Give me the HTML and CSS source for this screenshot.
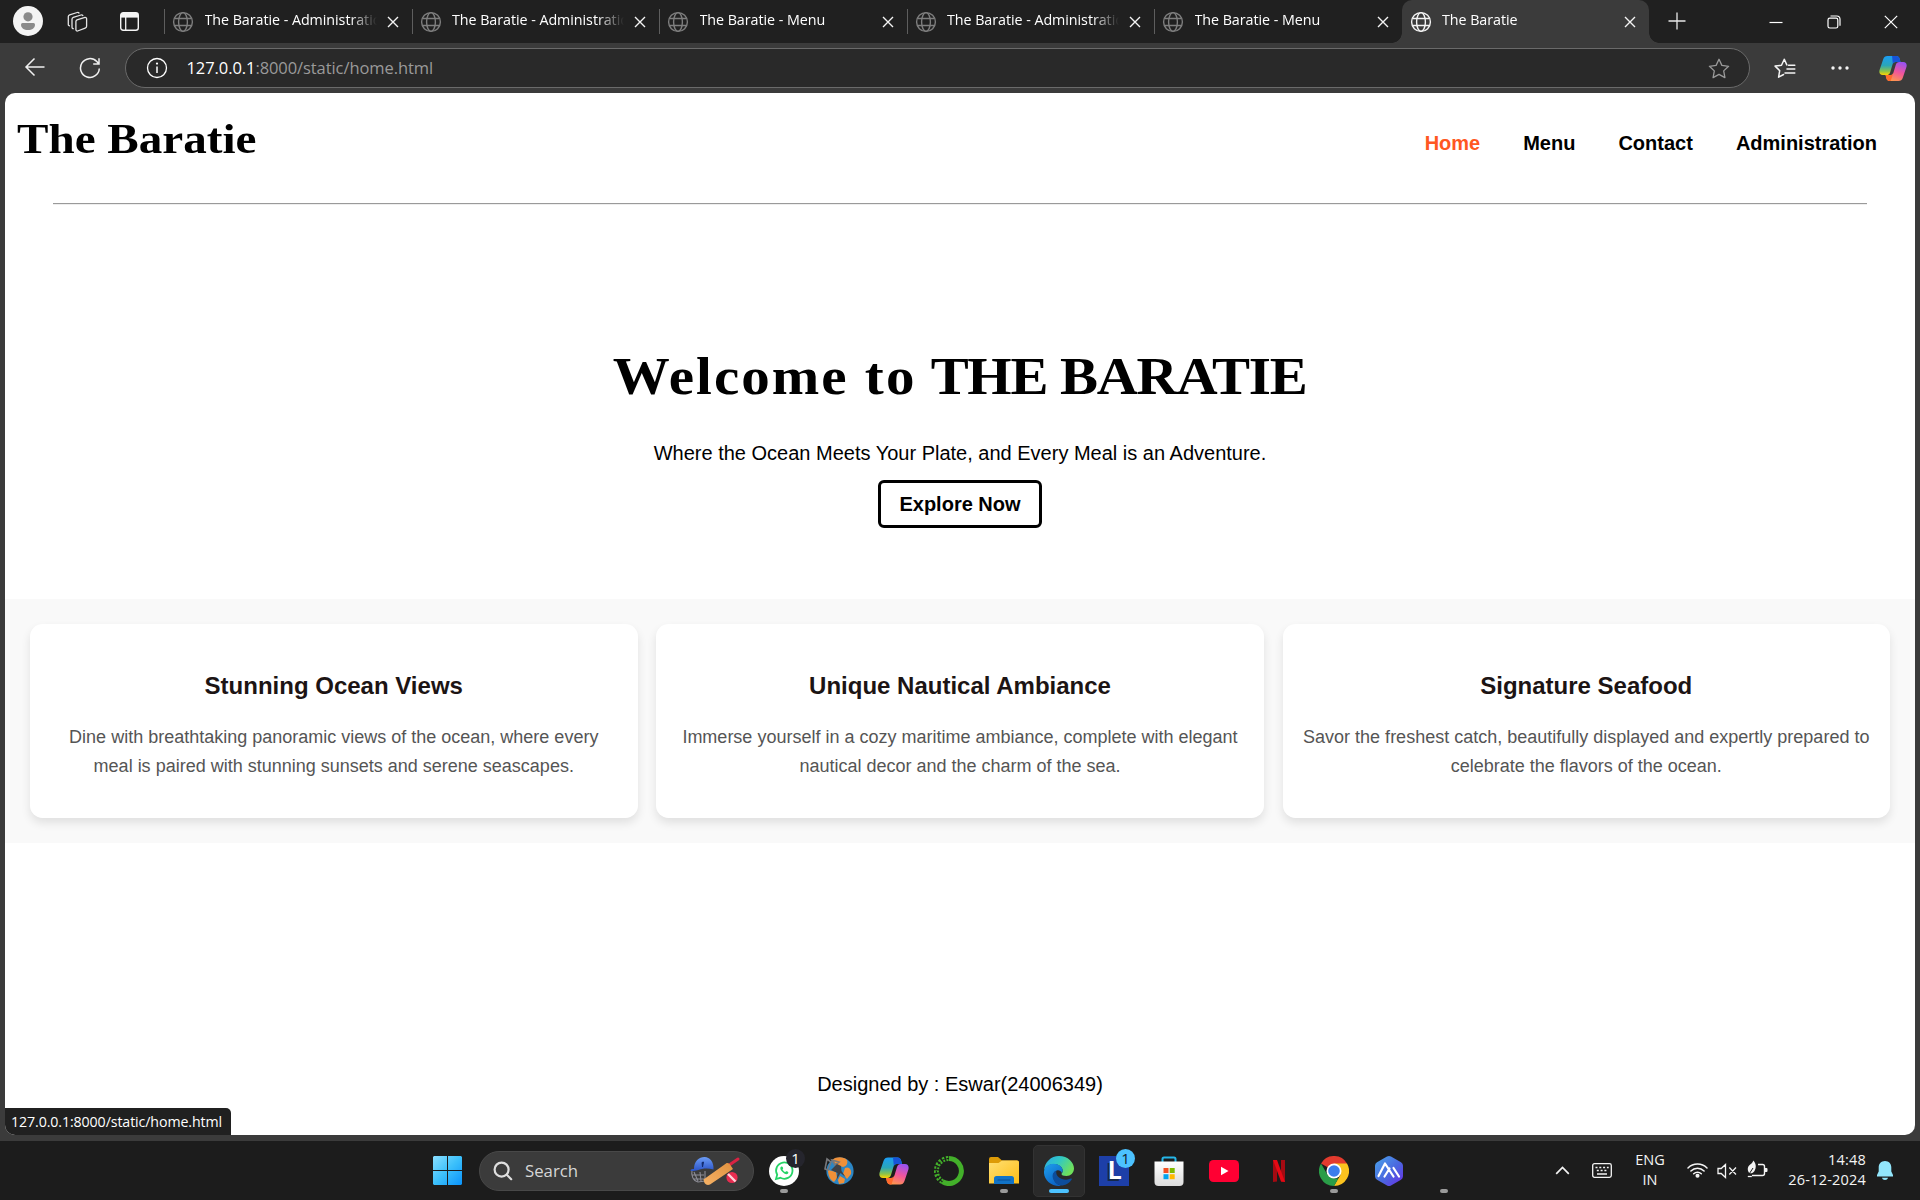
FILE: index.html
```html
<!DOCTYPE html>
<html lang="en">
<head>
<meta charset="utf-8">
<title>The Baratie</title>
<link rel="stylesheet" href="styles.css">
</head>
<body>
<svg class="defs" width="0" height="0">
  <defs>
    <symbol id="globe" viewBox="0 0 22 22"><g fill="none" stroke="currentColor" stroke-width="1.4"><circle cx="11" cy="11" r="9.4"/><ellipse cx="11" cy="11" rx="4.4" ry="9.4"/><path d="M2.4 7.5h17.2M2.4 14.5h17.2"/></g></symbol>
    <symbol id="cross" viewBox="0 0 12 12"><path d="M1 1l10 10M11 1L1 11" fill="none" stroke="currentColor" stroke-width="1.4"/></symbol>
    <symbol id="copilot" viewBox="0 0 30 28">
      <path d="M9 0.5h9.5c2 0 3 1 3.6 3l.9 3.5h-5c-2 0-3 1-3.6 3l-2.4 8c-.7 2-1.800 3-3.800 3H4C1 21-.2 18.500.6 15.500L4.500 4C5.300 1.600 6.800.5 9 .5z" fill="url(#cpA)"/>
      <path d="M14 .5h4.500c2 0 3 1 3.600 3L23 7h-5c-1.500 0-2.500.6-3.200 2z" fill="#1653d8"/>
      <path d="M21 27.500h-9.500c-2 0-3-1-3.600-3L7 21h5c2 0 3-1 3.600-3l2.400-8c.7-2 1.800-3 3.800-3H26c3 0 4.200 2.500 3.400 5.500L25.500 24c-.8 2.400-2.300 3.500-4.500 3.500z" fill="url(#cpB)"/>
      <path d="M7 21h5c1.700 0 2.700-.8 3.400-2.500L12.500 27.500h-1c-2 0-3-1-3.600-3z" fill="#ff6a2c"/>
    </symbol>
    <linearGradient id="cpA" x1="0" y1="0" x2="0" y2="1"><stop offset="0" stop-color="#1b9df5"/><stop offset=".5" stop-color="#2aa6b8"/><stop offset=".8" stop-color="#8bc34a"/><stop offset="1" stop-color="#ffd400"/></linearGradient>
    <linearGradient id="cpB" x1=".7" y1="0" x2=".3" y2="1"><stop offset="0" stop-color="#9a52f0"/><stop offset=".5" stop-color="#f2559b"/><stop offset="1" stop-color="#ff9a4a"/></linearGradient>
    <linearGradient id="win" gradientUnits="userSpaceOnUse" x1="0" y1="0" x2="29" y2="29"><stop offset="0" stop-color="#8adfff"/><stop offset=".5" stop-color="#3cc0fb"/><stop offset="1" stop-color="#0a93fb"/></linearGradient>
    <linearGradient id="folder" x1="0" y1="0" x2="1" y2="1"><stop offset="0" stop-color="#ffdf73"/><stop offset="1" stop-color="#fdbe16"/></linearGradient>
    <linearGradient id="edgeTop" x1="0" y1="0" x2="1" y2=".5"><stop offset="0" stop-color="#2aa8ea"/><stop offset=".5" stop-color="#31c8c4"/><stop offset="1" stop-color="#6fe05c"/></linearGradient>
    <linearGradient id="edgeBody" x1="0" y1="0" x2=".6" y2="1"><stop offset="0" stop-color="#1fa0ee"/><stop offset="1" stop-color="#0b62c4"/></linearGradient>
    <linearGradient id="bag" x1="0" y1="0" x2="0" y2="1"><stop offset="0" stop-color="#ffffff"/><stop offset="1" stop-color="#dcdcdc"/></linearGradient>
    <linearGradient id="hex" x1="0" y1="0" x2="1" y2="1"><stop offset="0" stop-color="#4aa5ea"/><stop offset=".55" stop-color="#4a67df"/><stop offset="1" stop-color="#6a2be6"/></linearGradient>
    <linearGradient id="helmet" x1="0" y1="0" x2="0" y2="1"><stop offset="0" stop-color="#6c9cf6"/><stop offset="1" stop-color="#2a52c6"/></linearGradient>
    <linearGradient id="bat" x1="0" y1="1" x2="1" y2="0"><stop offset="0" stop-color="#f6b266"/><stop offset="1" stop-color="#e0913f"/></linearGradient>
  </defs>
</svg>

<div class="screen">
  <div class="tabstrip">
    <svg class="avatar" width="30" height="30" viewBox="0 0 30 30"><circle cx="15" cy="15" r="15" fill="#f4f4f4"/><circle cx="15" cy="10.800" r="4.600" fill="#8a8a8a"/><path d="M9.500 17h11a1.500 1.500 0 0 1 1.500 1.500c0 3.700-3 5.500-7 5.500s-7-1.800-7-5.500A1.500 1.500 0 0 1 9.500 17z" fill="#8a8a8a"/></svg>
    <svg class="workspaces" width="22" height="22" viewBox="0 0 22 22" fill="none" stroke="#e4e4e4" stroke-width="1.300" stroke-linejoin="round"><path d="M11 8.800l8-2.400a1.300 1.300 0 0 1 1.600 1.300v7.500a2 2 0 0 1-1.400 1.900L11.600 20a1.300 1.300 0 0 1-1.700-1.200V10.500A2 2 0 0 1 11 8.800z"/><path d="M7.800 17.600c-1 .2-1.800-.3-1.800-1.400V8.200c0-.9.500-1.500 1.300-1.800L15 4c1-.3 1.800.1 2 1M4 14.800c-1 .1-1.700-.4-1.700-1.400V5.600c0-.9.500-1.500 1.300-1.800l7.600-2.300c1-.3 1.800.1 2 1"/></svg>
    <svg class="tabmenu" width="19" height="19" viewBox="0 0 19 19"><rect x=".7" y=".7" width="17.600" height="17.600" rx="2.500" fill="none" stroke="#f4f4f4" stroke-width="1.400"/><path d="M1 1h17v4.600H1z" fill="#f4f4f4"/><path d="M5.700 5v13" stroke="#f4f4f4" stroke-width="1.300"/></svg>
    <div class="tabs">
      <div class="tab"><svg class="globe"><use href="#globe"/></svg><span class="tab-title">The Baratie - Administration</span><svg class="close"><use href="#cross"/></svg></div>
      <div class="tab"><svg class="globe"><use href="#globe"/></svg><span class="tab-title">The Baratie - Administration</span><svg class="close"><use href="#cross"/></svg></div>
      <div class="tab"><svg class="globe"><use href="#globe"/></svg><span class="tab-title">The Baratie - Menu</span><svg class="close"><use href="#cross"/></svg></div>
      <div class="tab"><svg class="globe"><use href="#globe"/></svg><span class="tab-title">The Baratie - Administration</span><svg class="close"><use href="#cross"/></svg></div>
      <div class="tab"><svg class="globe"><use href="#globe"/></svg><span class="tab-title">The Baratie - Menu</span><svg class="close"><use href="#cross"/></svg></div>
      <div class="tab active"><svg class="globe"><use href="#globe"/></svg><span class="tab-title">The Baratie</span><svg class="close"><use href="#cross"/></svg></div>
    </div>
    <svg class="newtab" width="18" height="18" viewBox="0 0 18 18"><path d="M9 .5v17M.5 9h17" stroke="#e8e8e8" stroke-width="1.300"/></svg>
    <div class="window-buttons">
      <svg width="14" height="14" viewBox="0 0 14 14"><path d="M.5 7.500h13" stroke="#fff" stroke-width="1.200"/></svg>
      <svg width="14" height="14" viewBox="0 0 14 14" fill="none" stroke="#fff" stroke-width="1.200"><rect x="1" y="3.200" width="9.800" height="9.800" rx="1.800"/><path d="M3.500 1h6.300A3.200 3.200 0 0 1 13 4.200v6.500"/></svg>
      <svg width="14" height="14" viewBox="0 0 14 14"><path d="M.8.8l12.400 12.400M13.200.8L.8 13.200" stroke="#fff" stroke-width="1.200"/></svg>
    </div>
  </div>

  <div class="toolbar">
    <svg class="back" width="22" height="20" viewBox="0 0 22 20"><path d="M20.500 10H2M10.500 1.500L2 10l8.500 8.500" fill="none" stroke="#f0f0f0" stroke-width="1.500"/></svg>
    <svg class="reload" width="22" height="22" viewBox="0 0 22 22"><path d="M20.300 11.500A9.400 9.400 0 1 1 17.800 4.600L20 7M20 1.200V7h-5.800" fill="none" stroke="#f0f0f0" stroke-width="1.500"/></svg>
    <div class="omnibox">
      <svg width="22" height="22" viewBox="0 0 22 22"><circle cx="11" cy="11" r="9.500" fill="none" stroke="#fff" stroke-width="1.300"/><path d="M11 9.500v6.500" stroke="#fff" stroke-width="1.500"/><circle cx="11" cy="6.600" r="1.100" fill="#fff"/></svg>
      <span class="url"><b>127.0.0.1</b>:8000/static/home.html</span>
      <svg class="star" width="22" height="21" viewBox="0 0 22 21"><path d="M11 1.300l2.900 6.100 6.700.9-4.900 4.600 1.200 6.700L11 16.400l-5.900 3.200 1.200-6.700L1.400 8.300l6.700-.9z" fill="none" stroke="#9a9a9a" stroke-width="1.300" stroke-linejoin="round"/></svg>
    </div>
    <svg class="favorites" width="22" height="21" viewBox="0 0 22 21" fill="none" stroke="#f4f4f4" stroke-width="1.500" stroke-linejoin="round" stroke-linecap="round"><path d="M12.800 6.900L10.300 1.300 7.500 7.200l-6.400.9 4.600 4.500-1.100 6.600 5-2.700M13 11h7.800M14.500 7.200h6.300M11 15h9.800"/></svg>
    <svg class="more" width="18" height="4" viewBox="0 0 18 4" fill="#f4f4f4"><circle cx="2" cy="2" r="1.700"/><circle cx="9" cy="2" r="1.700"/><circle cx="16" cy="2" r="1.700"/></svg>
    <svg class="sidebar-copilot" width="28" height="27" preserveAspectRatio="none"><use href="#copilot"/></svg>
  </div>

  <div class="viewport">
    <main class="page">
      <header class="site-header">
        <div class="logo">The Baratie</div>
        <nav class="site-nav"><a class="current">Home</a><a>Menu</a><a>Contact</a><a>Administration</a></nav>
      </header>
      <hr class="rule">
      <section class="hero">
        <h1><span class="greeting">Welcome to</span> <span class="name">THE BARATIE</span></h1>
        <p>Where the Ocean Meets Your Plate, and Every Meal is an Adventure.</p>
        <a class="explore">Explore Now</a>
      </section>
      <section class="features">
        <article class="card"><h3>Stunning Ocean Views</h3><p>Dine with breathtaking panoramic views of the ocean, where every meal is paired with stunning sunsets and serene seascapes.</p></article>
        <article class="card"><h3>Unique Nautical Ambiance</h3><p>Immerse yourself in a cozy maritime ambiance, complete with elegant nautical decor and the charm of the sea.</p></article>
        <article class="card"><h3>Signature Seafood</h3><p>Savor the freshest catch, beautifully displayed and expertly prepared to celebrate the flavors of the ocean.</p></article>
      </section>
      <footer class="site-footer">Designed by : Eswar(24006349)</footer>
    </main>
    <div class="status">127.0.0.1:8000/static/home.html</div>
  </div>

  <div class="taskbar">
    <svg class="start" width="29" height="29" viewBox="0 0 29 29" fill="url(#win)"><path d="M1 0h13v14H0V1zM15 0h13l1 1v13H15zM0 15h14v14H1l-1-1zM15 15h14v13l-1 1H15z"/></svg>
    <div class="search">
      <svg width="20" height="20" viewBox="0 0 20 20" fill="none" stroke="#dedede" stroke-width="2.200" stroke-linecap="round"><circle cx="8.600" cy="8.600" r="7"/><path d="M13.800 13.800l4.400 4.400"/></svg>
      <span>Search</span>
      <svg class="cricket" width="50" height="29" viewBox="0 0 50 29">
        <g fill="none" stroke="#8d8d96" stroke-width="1.100"><path d="M2 15c-1 4 1 10 6 11l7-1M4 16l4 9M10 16l1 9M2 19h12M3 23h12M15 15v10"/></g>
        <path d="M4 13C4 5 9 1 14.500 1S24 6 23.500 13.500c-6-1.500-11-1-16 .8-3 1-7 1.200-7-.1 0-.8 2-1.200 3.500-1.200z" fill="url(#helmet)"/>
        <path d="M12 6.500l1.500-.5-1 5z" fill="#112a70" stroke="#112a70"/>
        <path d="M40 8.500l8-5.500" stroke="#d92343" stroke-width="3" stroke-linecap="round"/>
        <path d="M13.500 23.500L36 7.500c1.600-1 3.500 0 4.500 1.800L43 13 20 28.500c-2 1-4 .5-5.500-1.500z" fill="url(#bat)"/>
        <circle cx="42" cy="21.500" r="5.600" fill="#e82c50"/><path d="M38 18l7.500 7.500" stroke="#ffd2da" stroke-width="2.400"/>
      </svg>
    </div>
    <div class="apps">
      <div class="app running"><svg width="30" height="30" viewBox="0 0 30 30"><circle cx="15" cy="15" r="15" fill="#fff"/><path d="M7 23l1.200-4.300A8.200 8.200 0 1 1 11.400 21.800z" fill="none" stroke="#25d366" stroke-width="1.800"/><path d="M12.300 10.500c-1.500.8-1.300 2.800.7 5s4.500 3.400 5.800 2.200c1-1 .7-1.500-.3-2.100-1.300-.7-1.500-.4-2.200.4-1.200-.4-2.200-1.400-2.800-2.600.7-.7.900-1 .3-2.100-.3-.7-.8-1.100-1.500-.8z" fill="#25d366"/></svg><span class="badge dark">1</span></div>
      <div class="app"><svg width="30" height="30" viewBox="0 0 30 30"><circle cx="16" cy="15" r="13.600" fill="#2b86c5"/><path d="M8 4c5-4 12-3 15 0 1 3 0 6-4 7l-6-2z M21 12c4-2 7 2 6 6l-4 5-4-5z M4 14l8 2 1 6-3 4c-4-2-6-7-6-12z M16 20l5 3-1 4-5 1-1-4z" fill="#f09038"/><path d="M3 3l4 3-3 8-3-1zM8 4l7 2-4 3z" fill="none" stroke="#77787b" stroke-width="1.600"/><path d="M7 14l6-6 4 2 .5 5 4 6-5-4-4 7 1-7z" fill="#3f4146"/></svg></div>
      <div class="app"><svg width="30" height="28"><use href="#copilot"/></svg></div>
      <div class="app"><svg width="30" height="30" viewBox="0 0 30 30" fill="none" stroke="#43b02a"><path d="M15 2.500a12.500 12.500 0 1 1-6.600 23.200" stroke-width="5"/><path d="M8.400 25.700A12.500 12.500 0 0 1 15 2.500" stroke-width="5" stroke-dasharray="2.200 1.500"/><path d="M8.400 25.700A12.500 12.500 0 0 1 15 2.500" stroke="#1c1c1c" stroke-width="1.200" stroke-dasharray="3 2"/></svg></div>
      <div class="app running"><svg width="30" height="27" viewBox="0 0 30 27"><path d="M0 2a2 2 0 0 1 2-2h7l4 3.500h15a2 2 0 0 1 2 2V12H0z" fill="#dd9b07"/><path d="M0 6h9.500L13 3.600h15a2 2 0 0 1 2 2V26.500H0z" fill="url(#folder)"/><path d="M5 27v-5.500a2.500 2.500 0 0 1 2.500-2.500h15a2.500 2.500 0 0 1 2.500 2.500V27z" fill="#1173c7"/><path d="M9 23h12" stroke="#0b4f96" stroke-width="1.200" stroke-linecap="round"/></svg></div>
      <div class="app running selected"><svg width="30" height="30" viewBox="0 0 30 30"><path d="M0 15C.5 6 7 0 15 0c9 0 15 6.500 15 12.500 0 4.500-3.500 7.500-7.500 7.500-3.300 0-5-1-5-2 0-.7 1.200-1.300 1.200-3.300C18.700 11 14.500 8 10 8 5 8 1 11 0 15z" fill="url(#edgeTop)"/><path d="M0 15.500C.5 11 4.500 7.700 9.500 7.700c5 0 9.200 3 9.200 6.800 0 1-.3 1.800-.8 2.400-1-2-3-3-5-2.400-3 1-4.200 4-3.400 7.500 1.200 4.800 5 7.600 8.500 7.600-1 .3-2 .4-3 .4C6.500 30-.5 23.500 0 15.500z" fill="url(#edgeBody)"/><path d="M12.500 14.500c-3 1-4.500 4-3.600 7.500 1.200 4.700 5.200 7.700 9.600 7.500 4-.7 7.200-2.800 9.200-6 .4-.7-.2-1.200-.9-.9-2.800 1.300-5.800 1.400-8.800.4-4.500-1.500-6.500-5-5.500-8.500z" fill="#0d4d9b"/></svg></div>
      <div class="app"><span class="letter">L</span><span class="badge blue">1</span></div>
      <div class="app"><svg width="30" height="30" viewBox="0 0 30 30"><path d="M8.500 7V3a1.500 1.500 0 0 1 1.500-1.500h10A1.500 1.500 0 0 1 21.500 3v4" fill="none" stroke="#25b6e8" stroke-width="2"/><path d="M.5 5.500h29V26a4 4 0 0 1-4 4h-21a4 4 0 0 1-4-4z" fill="url(#bag)"/><path d="M9.500 12h5v5h-5z" fill="#f25022"/><path d="M15.700 12h5v5h-5z" fill="#7fba00"/><path d="M9.500 18.200h5v5h-5z" fill="#00a4ef"/><path d="M15.700 18.200h5v5h-5z" fill="#ffb900"/></svg></div>
      <div class="app"><svg width="30" height="22" viewBox="0 0 30 22"><rect width="30" height="22" rx="4.500" fill="#ff0033"/><path d="M12 6.800v8.400l7.500-4.200z" fill="#fff"/></svg></div>
      <div class="app"><svg width="12" height="22" viewBox="0 0 12 22"><path d="M0 0h4v21.500L0 22zM8 0h4v22l-4-.5z" fill="#a50a12"/><path d="M0 0h4l8 22-4-.5z" fill="#e50914"/></svg></div>
      <div class="app running"><svg width="30" height="30" viewBox="0 0 30 30"><path d="M15 15L2 7.500A15 15 0 0 1 28 7.500z" fill="#e33b2e"/><path d="M15 7.500h13A15 15 0 0 1 15 30l6.500-11.200z" fill="#fcc31e"/><path d="M2 7.500l6.500 11.300L15 22.500h4.300L15 30A15 15 0 0 1 2 7.500z" fill="#2a9d48"/><circle cx="15" cy="15" r="7.500" fill="#fff"/><circle cx="15" cy="15" r="5.800" fill="#3b7ded"/></svg></div>
      <div class="app"><svg width="28" height="30" viewBox="0 0 28 30"><path d="M12 .6a4 4 0 0 1 4 0l10 5.700a4 4 0 0 1 2 3.500v10.400a4 4 0 0 1-2 3.500l-10 5.700a4 4 0 0 1-4 0L2 23.700a4 4 0 0 1-2-3.500V9.800a4 4 0 0 1 2-3.500z" fill="url(#hex)"/><path d="M3.500 20L10 7.500 18.500 20.500M9.500 20.500L14.500 12.500M18.500 12l5.500 8.500" fill="none" stroke="#fff" stroke-width="2.200" stroke-linecap="round" stroke-linejoin="round"/></svg></div>
      <div class="app running"></div>
    </div>
    <div class="tray">
      <svg class="chevron" width="15" height="9" viewBox="0 0 15 9"><path d="M1.200 7.800l6.300-6.300 6.300 6.300" fill="none" stroke="#f4f4f4" stroke-width="1.700"/></svg>
      <svg class="keyboard" width="20" height="15" viewBox="0 0 20 15"><rect x=".7" y=".7" width="18.600" height="13.600" rx="1.800" fill="none" stroke="#f4f4f4" stroke-width="1.300"/><path d="M3.500 4.500h2m1.800 0h2m1.800 0h2m1.800 0h1.800M4.800 7.500h2m1.800 0h2m1.800 0h2M5 11h10" stroke="#f4f4f4" stroke-width="1.500"/></svg>
      <div class="lang"><span>ENG</span><span>IN</span></div>
      <svg class="wifi" width="21" height="16" viewBox="0 0 21 16" fill="none" stroke="#f4f4f4" stroke-width="1.500" stroke-linecap="round"><path d="M1 6a13.400 13.400 0 0 1 19 0M3.900 9a9.300 9.300 0 0 1 13.200 0M6.700 11.800a5.400 5.400 0 0 1 7.600 0"/><circle cx="10.500" cy="13.800" r="1.300" fill="#f4f4f4"/></svg>
      <svg class="volume" width="20" height="16" viewBox="0 0 20 16" fill="none" stroke="#f4f4f4" stroke-width="1.300"><path d="M1 5.500h3.200l4.300-4v13l-4.300-4H1zM12.300 4.500l6.700 7M19 4.500l-6.700 7"/></svg>
      <svg class="battery" width="21" height="18" viewBox="0 0 21 18"><path d="M11 4.500h4.500a2 2 0 0 1 2 2v7a2 2 0 0 1-2 2H5" fill="none" stroke="#f4f4f4" stroke-width="1.400"/><path d="M18 8h1.500q1 0 1 1v2q0 1-1 1H18z" fill="#f4f4f4"/><path d="M6.200.5c3 3 3.300 7 1.300 10.500C6 13.500 3 14 1.800 12.500-.3 9 1 6 3.500 4.200 5 3.200 6 2 6.200.5z" fill="#f4f4f4"/><path d="M.5 16.500L6 8" stroke="#1c1c1c" stroke-width="1"/><path d="M.8 16.500h4" stroke="#f4f4f4" stroke-width="1.300"/></svg>
      <div class="clock"><span>14:48</span><span>26-12-2024</span></div>
      <svg class="bell" width="16" height="19" viewBox="0 0 16 19" fill="#92e6fb"><path d="M8 0c3.800 0 6.300 2.800 6.300 6.300v4.200L16 14v1.500H0V14l1.700-3.500V6.300C1.700 2.800 4.200 0 8 0zM5 16.800h6c-.4 1.400-1.500 2.200-3 2.200s-2.600-.8-3-2.200z"/></svg>
    </div>
  </div>
</div>
</body>
</html>
```
FILE: styles.css
```css
* { box-sizing: border-box; }
body { margin: 0; background: #1c1c1c; }
svg { display: block; flex: none; }
.defs { position: absolute; }

.screen {
  width: 1920px;
  height: 1200px;
  display: flex;
  flex-direction: column;
  overflow: hidden;
  background: #3b3b3b;
  font-family: "Open Sans", "Noto Sans", sans-serif;
}

/* Tab strip */
.tabstrip {
  height: 43px;
  background: #202020;
  display: flex;
  align-items: center;
  color: #fff;
}
.avatar { margin-left: 13px; margin-top: -1px; }
.workspaces { margin-left: 23px; }
.tabmenu { margin-left: 32px; }
.tabs { display: flex; margin-left: 25px; height: 43px; }
.tab {
  width: 247.5px;
  height: 43px;
  display: flex;
  align-items: center;
  padding-left: 8px;
  background: linear-gradient(#5e5e5e, #5e5e5e) no-repeat 0 9px / 1px 25px;
}
.globe { width: 22px; height: 22px; margin-top: 1px; color: #7e7e7e; }
.tab-title {
  width: 172px;
  margin-left: 10.500px;
  margin-top: -3px;
  font-size: 14.300px;
  letter-spacing: -0.050px;
  line-height: 22px;
  white-space: nowrap;
  overflow: hidden;
  -webkit-mask-image: linear-gradient(90deg, #000 145px, transparent 172px);
  mask-image: linear-gradient(90deg, #000 145px, transparent 172px);
}
.close { width: 12px; height: 12px; margin-left: 10px; margin-top: 1px; color: #f4f4f4; }
.tab.active {
  background: #3b3b3b;
  border-radius: 10px 10px 0 0;
  position: relative;
}
.tab.active::before,
.tab.active::after {
  content: "";
  position: absolute;
  bottom: 0;
  width: 10px;
  height: 10px;
}
.tab.active::before { left: -10px; background: radial-gradient(circle at 0 0, transparent 9.500px, #3b3b3b 10px); }
.tab.active::after { right: -10px; background: radial-gradient(circle at 100% 0, transparent 9.500px, #3b3b3b 10px); }
.tab.active .globe { color: #f4f4f4; }
.newtab { margin-left: 18.500px; margin-top: -1px; }
.window-buttons { display: flex; gap: 43.500px; margin-left: auto; margin-right: 22px; }

/* Toolbar */
.toolbar {
  height: 50px;
  display: flex;
  align-items: center;
  background: #3b3b3b;
}
.back { margin-left: 24px; margin-top: -2px; }
.reload { margin-left: 33px; margin-top: -1px; }
.omnibox {
  width: 1625px;
  height: 40px;
  margin-left: 24px;
  padding: 0 19px 0 20px;
  border: 1px solid #6a6a6a;
  border-radius: 20px;
  background: #292929;
  display: flex;
  align-items: center;
}
.url { margin-left: 18.500px; margin-top: -2px; font-size: 16.500px; letter-spacing: -0.080px; color: #9a9a9a; flex: 1; }
.url b { font-weight: 400; color: #fff; }
.favorites { margin-left: 24px; }
.more { margin-left: 35px; margin-top: -1px; }
.sidebar-copilot { margin-left: 30px; }

/* Page */
.viewport {
  height: 1048px;
  padding: 0 5px 6px;
  position: relative;
}
.page {
  height: 1042px;
  background: #fff;
  border-radius: 10px;
  display: flex;
  flex-direction: column;
  font-family: "Liberation Sans", Arial, sans-serif;
  font-size: 20px;
  color: #000;
}
.site-header {
  height: 110px;
  padding: 18px 38px 0 12px;
  display: flex;
  justify-content: space-between;
}
.logo {
  font: bold 42px/56px "Liberation Serif", serif;
  transform: scaleX(1.122);
  transform-origin: 0 0;
}
.site-nav { display: flex; gap: 43px; padding-top: 20px; font-weight: bold; line-height: 24px; }
.site-nav .current { color: #ff5722; }
.rule {
  width: 1814px;
  height: 2px;
  margin: 0 0 0 48px;
  border: 0;
  border-top: 1px solid #9a9a9a;
  border-bottom: 1px solid #eeeeee;
}
.hero {
  height: 394px;
  padding-top: 136px;
  display: flex;
  flex-direction: column;
  align-items: center;
}
.hero h1 {
  margin: 0;
  font: bold 53px/70px "Liberation Serif", serif;
  white-space: nowrap;
  transform: scaleX(1.075);
}
.greeting { letter-spacing: 1.900px; }
.name { letter-spacing: -1.200px; }
.hero p { margin: 30px 0 0; line-height: 24px; }
.explore {
  width: 164px;
  height: 48px;
  margin-top: 15px;
  border: 3px solid #000;
  border-radius: 6px;
  font-weight: bold;
  line-height: 42px;
  text-align: center;
}
.features {
  height: 244px;
  padding: 25px;
  display: grid;
  grid-template-columns: repeat(3, 1fr);
  gap: 18.750px;
  background: #f9f9f9;
}
.card {
  padding: 48px 18.750px 0;
  background: #fff;
  border-radius: 12.500px;
  box-shadow: 0 5px 10px rgba(0, 0, 0, 0.1);
  text-align: center;
}
.card h3 { margin: 0 0 24.400px; font-size: 24px; line-height: 27px; color: #1c1414; }
.card p { margin: 0; font-size: 18px; line-height: 28.800px; color: #555; }
.site-footer { margin-top: auto; padding-bottom: 39px; line-height: 24px; text-align: center; }
.status {
  position: absolute;
  left: 5px;
  bottom: 6px;
  width: 226px;
  height: 27px;
  padding-left: 6px;
  border-radius: 0 5px 0 10px;
  background: #202020;
  color: #fff;
  font-size: 14.200px;
  letter-spacing: -0.100px;
  line-height: 27px;
}

/* Taskbar */
.taskbar {
  height: 59px;
  background: #1c1c1c;
  display: flex;
  align-items: center;
  color: #f4f4f4;
}
.start { margin-left: 433px; }
.search {
  width: 275px;
  height: 40px;
  margin-left: 17px;
  padding: 0 13px 0 13px;
  border-radius: 20px;
  border: 1px solid #484848;
  background: #3b3b3b;
  display: flex;
  align-items: center;
  font-size: 16.800px;
  color: #d6d6d6;
}
.search span { margin-left: 12px; margin-top: -1px; }
.cricket { margin-left: auto; }
.apps { display: flex; margin-left: 2px; }
.app {
  width: 55px;
  height: 59px;
  display: flex;
  align-items: center;
  justify-content: center;
  position: relative;
}
.app.running::after {
  content: "";
  position: absolute;
  left: 24px;
  bottom: 7px;
  width: 8px;
  height: 4px;
  border-radius: 2px;
  background: #9a9a9a;
}
.app.selected::before {
  content: "";
  position: absolute;
  left: 2px;
  top: 4px;
  width: 50px;
  height: 50px;
  border: 1px solid #333;
  border-radius: 5px;
  background: #2a2a2a;
}
.app.selected svg { position: relative; }
.app.selected::after { left: 18px; width: 20px; background: #4cc2ff; }
.letter {
  width: 30px;
  height: 30px;
  background: #1d3fa8;
  color: #fff;
  font: bold 24px/29px "Inter", sans-serif;
  text-align: center;
  text-shadow: -2px 2px 0 #14284a;
  padding-left: 3px;
}
.badge {
  position: absolute;
  left: 30px;
  top: 8px;
  width: 19px;
  height: 19px;
  border-radius: 50%;
  font-size: 15px;
  line-height: 19px;
  text-align: center;
}
.badge.dark { background: #25252d; color: #fff; }
.badge.blue { background: #4cc2ff; color: #10202c; }
.tray { display: flex; align-items: center; margin-left: auto; margin-right: 27px; font-size: 14.500px; line-height: 20px; }
.keyboard { margin-left: 22.500px; margin-top: -1px; }
.lang { width: 40px; margin-left: 18px; margin-top: -1px; display: flex; flex-direction: column; align-items: center; }
.wifi { margin-left: 17px; margin-top: -2px; }
.volume { margin-left: 9px; }
.battery { margin-left: 10px; margin-top: -3px; }
.clock { width: 90px; margin-left: 8px; margin-top: -2px; display: flex; flex-direction: column; align-items: flex-end; letter-spacing: 0.200px; }
.bell { margin-left: 11px; }
```
